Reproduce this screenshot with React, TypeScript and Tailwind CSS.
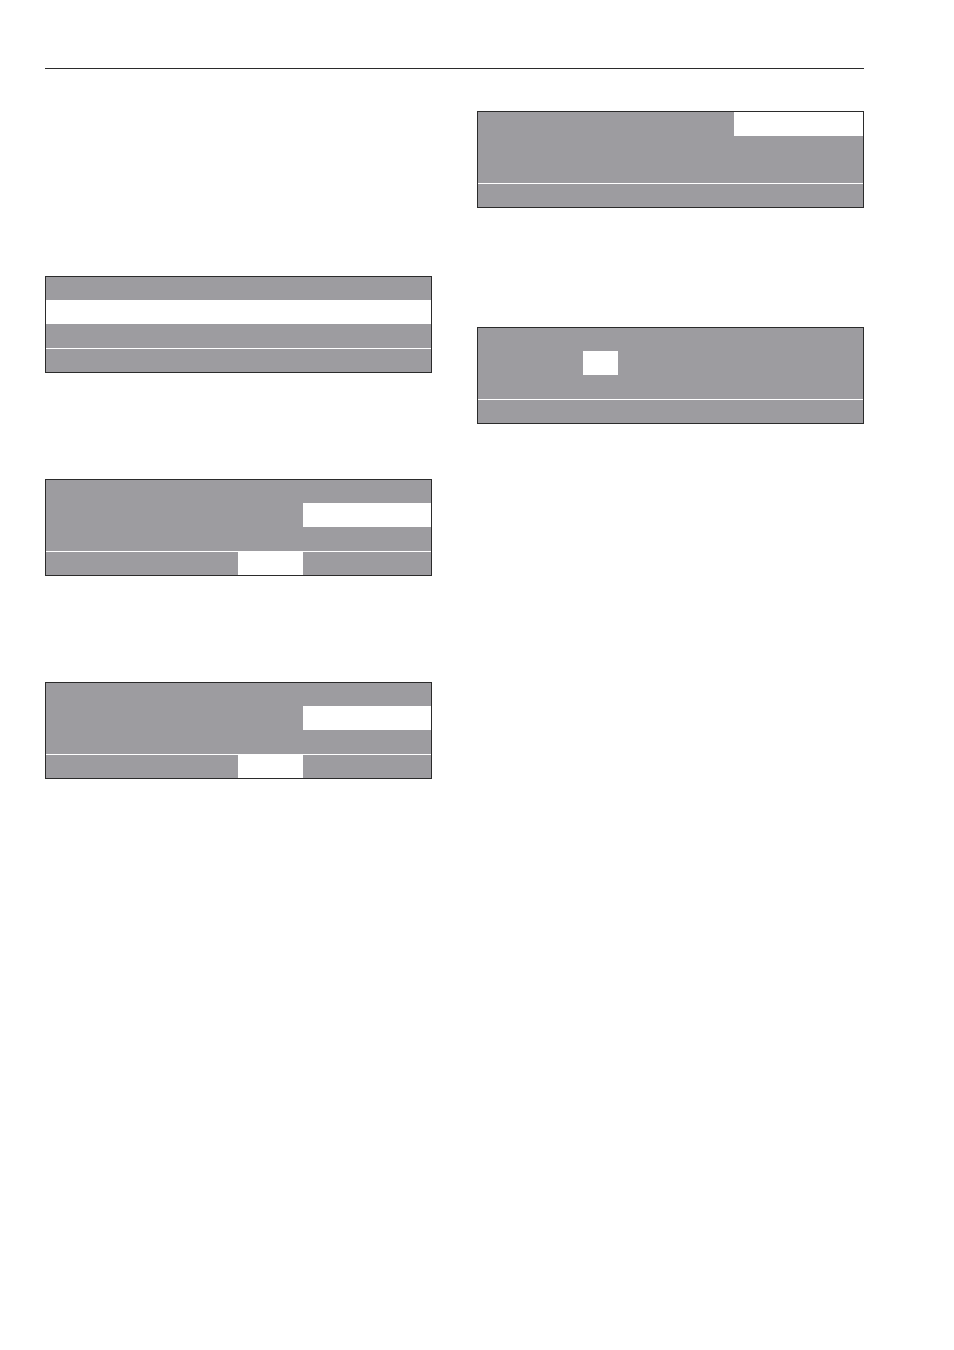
const gray = "bg-[#9d9ca0]";

// one display line, 24px tall; optional white highlight segment
function Row({ h = "h-[24px]", children }: { h?: string; children?: React.ReactNode }) {
  return <div className={`${h} flex ${gray}`}>{children}</div>;
}

function Panel({ children }: { children: React.ReactNode }) {
  return <div className="w-[387px] border border-[#2b2b2b] flex flex-col">{children}</div>;
}

const Sep = () => <div className="h-px bg-white" />;

export default function App() {
  return (
    <div className="w-[954px] h-[1350px] bg-white">
      <div className="pt-[68px] pl-[45px] w-[864px]">
        <div className="h-px bg-[#2b2b2b]" />
        <div className="flex gap-[45px]">
          {/* left column */}
          <div className="flex flex-col">
            <div className="mt-[207px]">
              <Panel>
                <Row h="h-[23px]" />
                <div className="h-[24px] bg-white" />
                <Row />
                <Sep />
                <Row h="h-[23px]" />
              </Panel>
            </div>
            <div className="mt-[106px]">
              <Panel>
                <Row h="h-[23px]" />
                <Row>
                  <div className="flex-1" />
                  <div className="w-[128px] bg-white" />
                </Row>
                <Row />
                <Sep />
                <Row h="h-[23px]">
                  <div className="w-[192px]" />
                  <div className="w-[65px] bg-white" />
                </Row>
              </Panel>
            </div>
            <div className="mt-[106px]">
              <Panel>
                <Row h="h-[23px]" />
                <Row>
                  <div className="flex-1" />
                  <div className="w-[128px] bg-white" />
                </Row>
                <Row />
                <Sep />
                <Row h="h-[23px]">
                  <div className="w-[192px]" />
                  <div className="w-[65px] bg-white" />
                </Row>
              </Panel>
            </div>
          </div>

          {/* right column */}
          <div className="flex flex-col">
            <div className="mt-[42px]">
              <Panel>
                <Row>
                  <div className="flex-1" />
                  <div className="w-[129px] bg-white" />
                </Row>
                <Row h="h-[47px]" />
                <Sep />
                <Row h="h-[23px]" />
              </Panel>
            </div>
            <div className="mt-[119px]">
              <Panel>
                <Row h="h-[23px]" />
                <Row>
                  <div className="w-[105px]" />
                  <div className="w-[35px] bg-white" />
                </Row>
                <Row />
                <Sep />
                <Row h="h-[23px]" />
              </Panel>
            </div>
          </div>
        </div>
      </div>
    </div>
  );
}
